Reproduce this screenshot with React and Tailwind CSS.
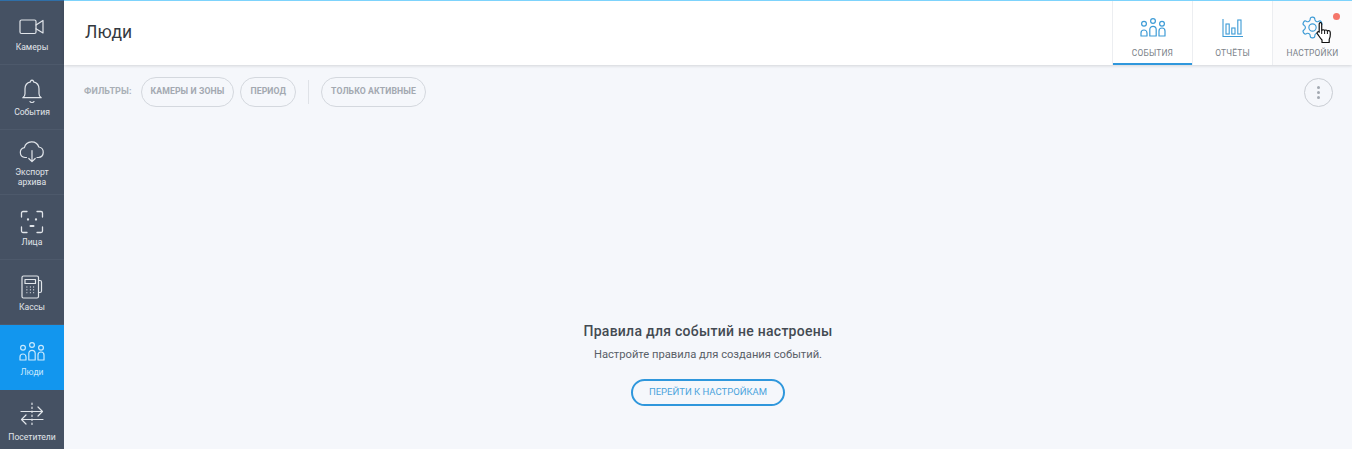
import React from "react";

const S = ({ children, w = 32, h = 32, vb = "0 0 32 32", sw = 1.3, className = "" }) => (
  <svg width={w} height={h} viewBox={vb} fill="none" stroke="currentColor" strokeWidth={sw} strokeLinecap="round" strokeLinejoin="round" className={className}>{children}</svg>
);

const People = ({ className = "" }) => (
  <S w={26} h={19} vb="0 0 26 19" className={className} sw={1.2}>
    <circle cx="13" cy="3" r="2.4" />
    <circle cx="4" cy="5.800" r="2.400" />
    <circle cx="22" cy="5.800" r="2.400" />
    <path d="M9.800 18v-6.500a3.200 3.200 0 0 1 6.400 0V18z" />
    <path d="M1 18v-3a3 3 0 0 1 6 0v3z" />
    <path d="M19 18v-5a3 3 0 0 1 6 0v5z" />
  </S>
);

const icons = {
  cam: (
    <S w={26} h={18} vb="0 0 26 18" sw={1.2}>
      <rect x="1" y="2" width="16" height="13.500" rx="1.500" />
      <path d="M17 7l7-4.500v12.500l-7-4.200" />
    </S>
  ),
  bell: (
    <S w={20} h={26} vb="0 0 20 26" sw={1.2}>
      <path d="M10 1.200a1.600 1.600 0 0 1 1.500 1.600c3.400.8 5.500 3.600 5.500 7v5c0 2 1 3.200 2.200 3.900H.8C2 18 3 16.800 3 14.800v-5c0-3.400 2.100-6.200 5.500-7A1.600 1.600 0 0 1 10 1.200z" />
      <path d="M8 22.600c.5 1.200 3.500 1.200 4 0" />
    </S>
  ),
  cloud: (
    <S w={26} h={22} vb="0 0 26 22" sw={1.2}>
      <path d="M7.500 16.500H6a5 5 0 0 1-.6-9.900A7.500 7.500 0 0 1 19.800 6a5.300 5.300 0 0 1-.3 10.500H18" />
      <path d="M13 9.500v11M9.800 17.500l3.200 3.200 3.200-3.200" />
    </S>
  ),
  face: (
    <S w={24} h={24} vb="0 0 24 24" sw={1.3}>
      <path d="M1.500 7V3a1.500 1.500 0 0 1 1.500-1.500h4M17 1.500h4A1.500 1.500 0 0 1 22.500 3v4M22.500 17v4a1.500 1.500 0 0 1-1.500 1.500h-4M7 22.500H3A1.500 1.500 0 0 1 1.500 21v-4" />
      <circle cx="8" cy="9.500" r=".5" fill="currentColor" />
      <circle cx="16" cy="9.500" r=".5" fill="currentColor" />
      <path d="M10.500 16h3" strokeWidth="2" />
    </S>
  ),
  pos: (
    <S w={22} h={24} vb="0 0 22 24" sw={1.2}>
      <rect x="1" y="1" width="16.500" height="22" rx="1.500" />
      <rect x="4" y="4.500" width="10.500" height="4" />
      <path d="M17.500 5.500h1.500a1.500 1.500 0 0 1 1.500 1.500v9a1.500 1.500 0 0 1-1.500 1.500h-1.500" />
      <path d="M5.500 12h.8M8.900 12h.8M12.300 12h.8M5.500 14.800h.8M8.900 14.800h.8M12.300 14.800h.8M5.500 17.600h.8M8.900 17.600h.8M12.300 17.600h.8" strokeWidth="1.400" strokeLinecap="butt" />
    </S>
  ),
  flow: (
    <S w={24} h={26} vb="0 0 24 26" sw={1.2}>
      <path d="M1 9.500h21.500M18 5l4.500 4.500L18 14" />
      <path d="M23 17.500H1.500M6 13l-4.500 4.500L6 22" />
      <path d="M12 1v24" strokeDasharray="1.500 2.500" />
    </S>
  ),
};

const navItems = [
  { label: ["Камеры"], icon: icons.cam },
  { label: ["События"], icon: icons.bell },
  { label: ["Экспорт", "архива"], icon: icons.cloud, two: true },
  { label: ["Лица"], icon: icons.face },
  { label: ["Кассы"], icon: icons.pos },
  { label: ["Люди"], icon: <People />, active: true },
  { label: ["Посетители"], icon: icons.flow, up: true },
];

const Gear = () => (
  <svg width="25" height="25" viewBox="0 0 24 24" fill="none" stroke="currentColor" strokeWidth="1.100" strokeLinecap="round" strokeLinejoin="round">
    <path d="M12.220 2h-.44a2 2 0 0 0-2 2v.18a2 2 0 0 1-1 1.730l-.43.25a2 2 0 0 1-2 0l-.15-.08a2 2 0 0 0-2.730.73l-.22.38a2 2 0 0 0 .73 2.730l.15.1a2 2 0 0 1 1 1.720v.510a2 2 0 0 1-1 1.740l-.15.090a2 2 0 0 0-.73 2.730l.22.380a2 2 0 0 0 2.730.730l.15-.080a2 2 0 0 1 2 0l.43.250a2 2 0 0 1 1 1.730V20a2 2 0 0 0 2 2h.44a2 2 0 0 0 2-2v-.18a2 2 0 0 1 1-1.730l.43-.250a2 2 0 0 1 2 0l.15.080a2 2 0 0 0 2.730-.730l.22-.390a2 2 0 0 0-.73-2.730l-.15-.080a2 2 0 0 1-1-1.740v-.5a2 2 0 0 1 1-1.740l.15-.090a2 2 0 0 0 .73-2.730l-.22-.380a2 2 0 0 0-2.730-.730l-.15.080a2 2 0 0 1-2 0l-.43-.250a2 2 0 0 1-1-1.730V4a2 2 0 0 0-2-2z" />
    <circle cx="12" cy="12" r="3.500" />
  </svg>
);

const Chart = () => (
  <svg width="22" height="20" viewBox="0 0 22 20" fill="none" stroke="currentColor" strokeWidth="1.100">
    <path d="M1 1v17.500h20" />
    <rect x="4" y="6" width="3.200" height="10" />
    <rect x="9.800" y="10" width="3.200" height="6" />
    <rect x="15.800" y="2" width="3.200" height="14" />
  </svg>
);

const Hand = () => (
  <svg width="18" height="24" viewBox="0 0 18 24" className="absolute left-[1316px] top-[21px]">
    <path d="M4 1.500c1 0 1.700.7 1.700 1.700v6.300c.3-1 2.600-1.100 2.900.2.300-1 2.500-1 2.800.4.500-.8 2.600-.6 2.800 1 .3 3 0 5.500-1 7.500v2.900H6v-2.500c-1.500-1.500-3-4-4.700-6.300-.9-1.300 1-2.600 1.900-1.500V3.200c0-1 .7-1.700 1.700-1.700z" fill="#fff" stroke="#111" strokeWidth="1.200" strokeLinejoin="round" />
    <path d="M5.700 9.500V13M8.600 9.700V13M11.400 10.100V13" stroke="#111" strokeWidth="1" fill="none" />
  </svg>
);

const Tab = ({ icon, label, active, pale }) => (
  <div className={`relative w-[80px] h-[64px] flex flex-col items-center border-l border-[#eceef1] ${pale ? "bg-[#fbfbfc]" : "bg-white"}`}>
    <div className="h-[25px] mt-[14px] flex items-center justify-center text-[#3d9bd6]">{icon}</div>
    <div className="mt-[7px] text-[8.400px] leading-[12px] tracking-[0.2px] text-[#7a8188]">{label}</div>
    {active && <div className="absolute left-0 right-0 bottom-0 h-[2px] bg-[#2f97dc]" />}
  </div>
);

const Chip = ({ children }) => (
  <div className="h-[30px] px-[9px] flex items-center rounded-full border border-[#d4d8de] text-[8.700px] font-bold tracking-[0.1px] text-[#a3a9b1]">{children}</div>
);

export default function App() {
  return (
    <div className="relative w-[1352px] h-[449px] overflow-hidden flex bg-[#f5f7fb] font-['Roboto',sans-serif]">
      <aside className="w-[64px] h-full shrink-0 bg-[#455163] shadow-[inset_0_1px_0_#2f6fa8]">
        {navItems.map((it) => (
          <div key={it.label[0]} className={`h-[65px] flex flex-col items-center border-b border-[#4d596b] ${it.active ? "bg-[#1296ee] border-[#1296ee] text-[#c9e9fd]" : "text-[#e1e5ea]"}`}>
            <div className={`h-[27px] flex items-center justify-center ${it.two ? "mt-[8px]" : it.up ? "mt-[11px] mb-[2px]" : "mt-[13px]"}`}>{it.icon}</div>
            <div className="mt-[2px] text-[8.600px] leading-[10px] text-center">
              {it.label.map((l) => <div key={l}>{l}</div>)}
            </div>
          </div>
        ))}
      </aside>
      <div className="flex-1 min-w-0 flex flex-col">
        <header className="h-[65px] shrink-0 flex items-start justify-between bg-white border-t border-[#7dd3fc] shadow-[0_1px_3px_rgba(0,0,0,0.14)]">
          <h1 className="ml-[21px] mt-[19px] text-[17.500px] leading-[24px] font-normal text-[#33393f]">Люди</h1>
          <div className="flex">
            <Tab icon={<People />} label="СОБЫТИЯ" active />
            <Tab icon={<Chart />} label="ОТЧЁТЫ" />
            <Tab icon={<Gear />} label="НАСТРОЙКИ" pale />
          </div>
        </header>
        <div className="flex items-center h-[30px] mt-[12px] pl-[20px] pr-[19px]">
          <span className="text-[9px] font-bold tracking-[0.1px] text-[#a9afb6] mr-[9px]">ФИЛЬТРЫ:</span>
          <Chip>КАМЕРЫ И ЗОНЫ</Chip>
          <div className="w-[6px]" />
          <Chip>ПЕРИОД</Chip>
          <div className="w-px h-[24px] bg-[#dfe2e7] ml-[12px] mr-[12px]" />
          <Chip>ТОЛЬКО АКТИВНЫЕ</Chip>
          <div className="ml-auto w-[29px] h-[29px] rounded-full border border-[#c9cdd3] flex flex-col items-center justify-center gap-[2px]">
            <span className="w-[3px] h-[3px] rounded-full bg-[#a3a9b1]" />
            <span className="w-[3px] h-[3px] rounded-full bg-[#a3a9b1]" />
            <span className="w-[3px] h-[3px] rounded-full bg-[#a3a9b1]" />
          </div>
        </div>
        <main className="flex flex-col items-center mt-[215px]">
          <h2 className="text-[14px] leading-[18px] font-medium tracking-[0.27px] text-[#434a52]">Правила для событий не настроены</h2>
          <p className="mt-[7px] text-[11.200px] leading-[16px] text-[#596068]">Настройте правила для создания событий.</p>
          <div className="mt-[16px] w-[154px] h-[27px] rounded-full border-2 border-[#2f97dc] flex items-center justify-center text-[9.500px] text-[#4aa3dc]">ПЕРЕЙТИ К НАСТРОЙКАМ</div>
        </main>
      </div>
      <span className="absolute left-[1333px] top-[13px] w-[7px] h-[7px] rounded-full bg-[#f5766a]" />
      <Hand />
    </div>
  );
}
